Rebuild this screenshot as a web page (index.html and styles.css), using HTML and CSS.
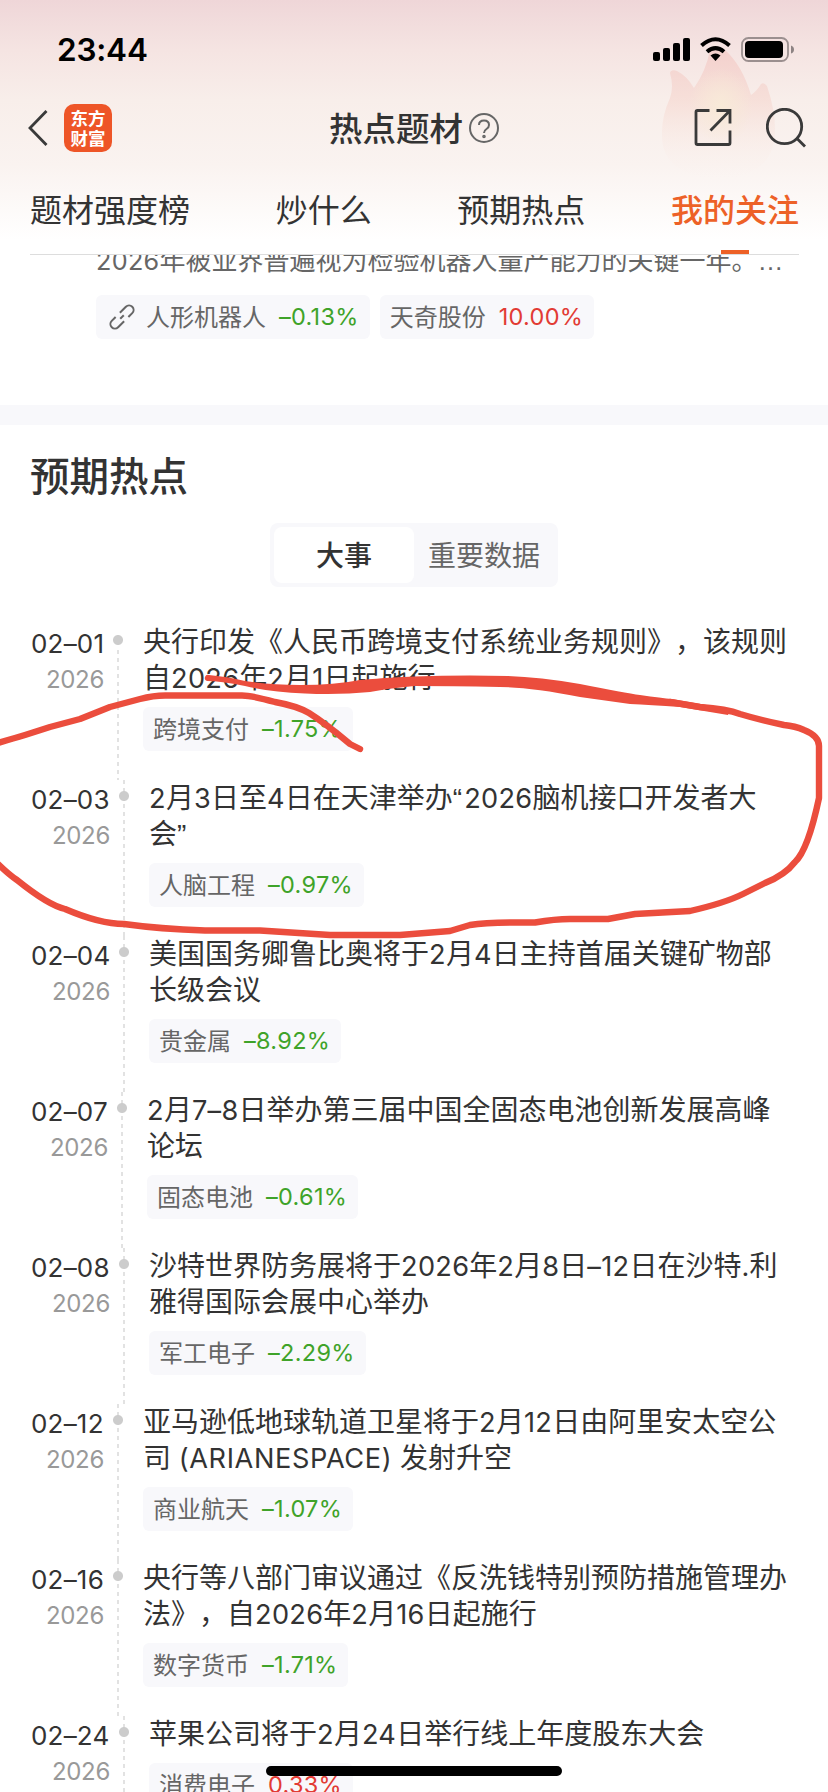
FILE: index.html
```html
<!DOCTYPE html>
<html lang="zh-CN">
<head>
  <meta charset="UTF-8" />
  <meta name="viewport" content="width=device-width, initial-scale=1.0"/>
  <title>热点题材</title>
  <link rel="stylesheet" href="styles.css">
</head>
<body>
  <div class="screen">
    <header class="header">
      <svg class="flame" width="116" height="130" viewBox="0 0 116 130">
        <defs>
          <linearGradient id="flameFill" x1="0" y1="0" x2="0" y2="1">
            <stop offset="0" stop-color="#f3cdc9" stop-opacity=".85"/>
            <stop offset=".4" stop-color="#f6dad3" stop-opacity=".7"/>
            <stop offset=".75" stop-color="#f9e9e3" stop-opacity=".3"/>
            <stop offset="1" stop-color="#faf1ed" stop-opacity="0"/>
          </linearGradient>
          <radialGradient id="flameGlow">
            <stop offset="0" stop-color="#f8ead8"/>
            <stop offset="1" stop-color="#f8ead8" stop-opacity="0"/>
          </radialGradient>
        </defs>
        <path d="M9 23Q10 19 16 21Q26 26 33 38Q45 21 49 0H64Q81 15 90 45Q96 41 100 34Q103 32 106 36Q118 72 112 96Q104 126 58 130Q9 126 2 96Q-2 72 9 48Q13 37 9 23Z" fill="url(#flameFill)"/>
        <ellipse cx="60" cy="56" rx="32" ry="38" fill="url(#flameGlow)"/>
      </svg>

      <div class="status-bar">
        <span class="time">23:44</span>
        <svg class="status-icons" width="142" height="26" viewBox="0 0 142 26">
          <rect x="0" y="15" width="7" height="9" rx="2"/>
          <rect x="10" y="11" width="7" height="13" rx="2"/>
          <rect x="20" y="6" width="7" height="18" rx="2"/>
          <rect x="30" y="1" width="7" height="23" rx="2"/>
          <g fill="none" stroke="#000" stroke-width="4">
            <path d="M48.500 8.500Q62.500 -4 76.500 8.500"/>
            <path d="M54 14.800Q62.500 7.500 71 14.800"/>
          </g>
          <path d="M57.500 18.500Q62.500 14.500 67.500 18.500L62.500 24Z"/>
          <rect x="89" y="1" width="46" height="23" rx="6.500" fill="none" stroke="#9b8f8f" stroke-width="1.800"/>
          <rect x="92" y="4" width="38" height="17" rx="4"/>
          <path d="M138 8.500Q141 9.500 141 12.500Q141 15.500 138 16.500Z" fill="#8d8383"/>
        </svg>
      </div>

      <div class="nav-bar">
        <div class="nav-side">
          <svg class="back" width="20" height="38" viewBox="0 0 20 38"><path d="M18.500 2L2 19L18.500 36"/></svg>
          <div class="app-logo">东方<br>财富</div>
        </div>
        <div class="nav-title">
          <h1>热点题材</h1>
          <svg width="30" height="30" viewBox="0 0 30 30">
            <circle cx="15" cy="15" r="14"/>
            <path d="M10 12Q10 7.500 15 7.500Q20 7.500 20 12Q20 14.500 17.500 16Q15 17.500 15 20"/>
            <circle cx="15" cy="23.500" r=".8"/>
          </svg>
        </div>
        <div class="nav-side nav-actions">
          <svg width="38" height="38" viewBox="0 0 38 38">
            <path d="M15.500 1.500H3.500Q2 1.500 2 3V34Q2 35.500 3.500 35.500H34.500Q36 35.500 36 34V21.500"/>
            <path d="M22.500 1.500H36V14.500M36 1.500L16.500 21.500"/>
          </svg>
          <svg width="40" height="40" viewBox="0 0 40 40">
            <circle cx="18.500" cy="18.500" r="17.200"/>
            <path d="M30.500 30L39 38.500"/>
          </svg>
        </div>
      </div>

      <nav class="tabs">
        <a>题材强度榜</a>
        <a>炒什么</a>
        <a>预期热点</a>
        <a class="active">我的关注</a>
      </nav>
    </header>

    <section class="news">
      <p><span class="num">2026</span>年被业界普遍视为检验机器人量产能力的关键一年。…</p>
      <div class="tags">
        <div class="tag">
          <svg class="link" width="26" height="26" viewBox="0 0 26 26">
            <g transform="rotate(-45 13 13)">
              <path d="M14.500 8.500H23A4.500 4.500 0 0 1 23 17.500H17.500"/>
              <path d="M11.500 17.500H3A4.500 4.500 0 0 1 3 8.500H8.500"/>
              <path d="M10.500 13H15.500"/>
            </g>
          </svg>
          人形机器人<span class="down">–0.13%</span>
        </div>
        <div class="tag">天奇股份<span class="up">10.00%</span></div>
      </div>
    </section>

    <section class="forecast">
      <h2>预期热点</h2>
      <div class="switch">
        <span class="on">大事</span>
        <span>重要数据</span>
      </div>

      <div class="timeline">
        <div class="item short">
          <div class="date">02–01<small>2026</small></div>
          <div class="axis"></div>
          <div class="event">
            <p>央行印发《人民币跨境支付系统业务规则》，该规则<br>自<span class="num">2026</span>年<span class="num">2</span>月<span class="num">1</span>日起施行</p>
            <div class="tag">跨境支付<span class="down">–1.75%</span></div>
          </div>
        </div>
        <div class="item">
          <div class="date">02–03<small>2026</small></div>
          <div class="axis"></div>
          <div class="event">
            <p><span class="num">2</span>月<span class="num">3</span>日至<span class="num">4</span>日在天津举办<span class="quote">“</span><span class="num">2026</span>脑机接口开发者大<br>会<span class="quote">”</span></p>
            <div class="tag">人脑工程<span class="down">–0.97%</span></div>
          </div>
        </div>
        <div class="item">
          <div class="date">02–04<small>2026</small></div>
          <div class="axis"></div>
          <div class="event">
            <p>美国国务卿鲁比奥将于<span class="num">2</span>月<span class="num">4</span>日主持首届关键矿物部<br>长级会议</p>
            <div class="tag">贵金属<span class="down">–8.92%</span></div>
          </div>
        </div>
        <div class="item medium">
          <div class="date">02–07<small>2026</small></div>
          <div class="axis"></div>
          <div class="event">
            <p><span class="num">2</span>月<span class="num">7–8</span>日举办第三届中国全固态电池创新发展高峰<br>论坛</p>
            <div class="tag">固态电池<span class="down">–0.61%</span></div>
          </div>
        </div>
        <div class="item">
          <div class="date">02–08<small>2026</small></div>
          <div class="axis"></div>
          <div class="event">
            <p>沙特世界防务展将于<span class="num">2026</span>年<span class="num">2</span>月<span class="num">8</span>日<span class="num">–12</span>日在沙特<span class="num">.</span>利<br>雅得国际会展中心举办</p>
            <div class="tag">军工电子<span class="down">–2.29%</span></div>
          </div>
        </div>
        <div class="item short">
          <div class="date">02–12<small>2026</small></div>
          <div class="axis"></div>
          <div class="event">
            <p>亚马逊低地球轨道卫星将于<span class="num">2</span>月<span class="num">12</span>日由阿里安太空公<br>司 <span class="num latin">(ARIANESPACE)</span> 发射升空</p>
            <div class="tag">商业航天<span class="down">–1.07%</span></div>
          </div>
        </div>
        <div class="item short">
          <div class="date">02–16<small>2026</small></div>
          <div class="axis"></div>
          <div class="event">
            <p>央行等八部门审议通过《反洗钱特别预防措施管理办<br>法》，自<span class="num">2026</span>年<span class="num">2</span>月<span class="num">16</span>日起施行</p>
            <div class="tag">数字货币<span class="down">–1.71%</span></div>
          </div>
        </div>
        <div class="item">
          <div class="date">02–24<small>2026</small></div>
          <div class="axis"></div>
          <div class="event">
            <p>苹果公司将于<span class="num">2</span>月<span class="num">24</span>日举行线上年度股东大会</p>
            <div class="tag">消费电子<span class="up">0.33%</span></div>
          </div>
        </div>
      </div>
    </section>

    <!-- hand-drawn marker -->
    <svg class="marker" width="828" height="1792" viewBox="0 0 828 1792">
      <path class="line" d="M-6 744Q12 739 25 735L50 727L80 719L110 707L140 699Q155 695 168 695.500H242Q252 695.500 275 702Q297 706 309 713Q325 723 350 744L360 749"/>
      <path class="line" d="M-6 860Q8 874 17 880Q48 905 65 909Q100 924 124 924Q160 929 205 930.500H260L330 935H400Q425 933 450 931L470 925Q490 922 535 922.500Q555 919 570 919H608L635 914L690 911Q725 903 743 894L765 883Q785 875 795 862Q808 850 819 798V746Q819 736 804 730Q795 726 784 725Q760 720 740 714Q727 709 700 707L670 702"/>
      <path class="thick" d="M209 675Q230 677 245 681Q270 685 300 685Q335 685 360 680Q395 677 414 676.500Q460 675 508 676Q540 677 580 684Q625 693 640 695Q662 698 672 699Q700 704 730 709L728 715L680 707Q650 705 630 704L580 697Q530 687 500 687Q450 686 414 686Q392 688 370 692Q340 695 305 693.500Q270 692 245 686Q220 681 207 681A3 3 0 0 1 209 675Z"/>
    </svg>
    <div class="home-bar"></div>
  </div>
</body>
</html>
```

FILE: styles.css
```css
body {
  margin: 0;
  background: #fff;
  font-family: "Liberation Sans", "Noto Sans CJK SC", sans-serif;
  color: #333;
  text-spacing-trim: space-all;
}

h1, h2, p {
  margin: 0;
}

.screen {
  position: relative;
  width: 828px;
  height: 1792px;
  overflow: hidden;
}

/* header */
.header {
  position: relative;
  height: 254px;
  background: linear-gradient(to bottom, #efd6d8 0, #f5e4e2 50px, #f8eeea 100px, #faf3f0 165px, #fff 240px);
}

.flame {
  position: absolute;
  left: 661px;
  top: 50px;
}

.status-bar {
  position: relative;
  display: flex;
  justify-content: space-between;
  align-items: center;
  height: 100px;
  padding: 0 33px 0 57px;
}

.time {
  font: 600 31.500px/1 Inter, sans-serif;
  color: #000;
  letter-spacing: -0.2px;
}

.nav-bar {
  position: relative;
  display: flex;
  align-items: center;
  justify-content: space-between;
  height: 56px;
  padding: 0 22px;
}

.nav-bar svg {
  fill: none;
  stroke: #3a3a3a;
  stroke-width: 2.8;
}

.nav-side {
  display: flex;
  align-items: center;
  width: 112px;
}

.nav-bar .back {
  margin-left: 6px;
}

.app-logo {
  width: 48px;
  height: 48px;
  box-sizing: border-box;
  margin-left: 16px;
  padding-top: 4px;
  border-radius: 10px;
  background: #ee5527;
  color: #fff;
  font: 700 17.5px/20px "Noto Sans CJK SC", sans-serif;
  text-align: center;
}

.nav-title {
  display: flex;
  align-items: center;
  gap: 6px;
}

.nav-title h1 {
  padding-top: 3px;
  font-size: 33.500px;
  line-height: 48px;
  font-weight: 500;
}

.nav-title svg {
  stroke: #666;
  stroke-width: 2;
}

.nav-actions {
  justify-content: space-between;
}

.tabs {
  display: flex;
  justify-content: space-between;
  margin: 0 29px 0 30px;
  height: 99px;
  box-sizing: border-box;
  border-bottom: 1px solid #ddd;
  font-size: 32px;
  line-height: 111px;
}

.tabs a {
  position: relative;
}

.tabs .active {
  color: #ed6127;
  font-weight: 500;
}

.tabs .active::after {
  content: "";
  position: absolute;
  left: 50%;
  top: 94px;
  width: 28px;
  height: 4px;
  margin-left: -14px;
  background: #ed6127;
}

/* numbers */
.num {
  font-family: Inter, "Noto Sans CJK SC", sans-serif;
  font-size: 0.97em;
  line-height: 0;
  letter-spacing: 0.3px;
}

.latin {
  letter-spacing: 0.6px;
}

.tag {
  display: flex;
  align-items: center;
  box-sizing: border-box;
  width: max-content;
  height: 44px;
  padding: 0 11px 3px 10px;
  border-radius: 6px;
  background: #f8f8fb;
  color: #666;
  font-size: 24px;
}

.tag span {
  margin: 2px 0 0 13px;
  font-family: Inter, sans-serif;
  font-size: 23.500px;
  letter-spacing: 0.3px;
}

.tag .down {
  color: #3fa329;
}

.tag .up {
  color: #e23b34;
}

/* clipped news row */
.news {
  height: 151px;
  padding-left: 96px;
  overflow: hidden;
}

.news p {
  margin-top: -11px;
  height: 52px;
  font-size: 26px;
  line-height: 36px;
  color: #666;
  white-space: nowrap;
}

.tags {
  display: flex;
  gap: 10px;
}

.link {
  margin: 3px 11px 0 3px;
  overflow: visible;
  fill: none;
  stroke: #666;
  stroke-width: 2;
}

/* forecast */
.forecast {
  border-top: 20px solid #f8f8fb;
}

.forecast h2 {
  margin: 23px 0 17px 30px;
  font-size: 39.500px;
  line-height: 58px;
  font-weight: 500;
}

.switch {
  display: flex;
  box-sizing: border-box;
  width: 288px;
  height: 64px;
  margin: 0 auto;
  padding: 4px;
  border-radius: 8px;
  background: #f8f8fb;
  color: #666;
  font-size: 28px;
  line-height: 59px;
  text-align: center;
}

.switch span {
  width: 140px;
}

.switch .on {
  border-radius: 8px;
  background: #fff;
  color: #333;
  font-weight: 500;
}

.timeline {
  margin-top: 37px;
}

.item {
  display: flex;
  height: 156px;
  padding-left: 31px;
}

.date {
  width: 79px;
  font: 26px/40px Inter, sans-serif;
  letter-spacing: 0.2px;
  white-space: nowrap;
}

.medium .date {
  width: 77px;
}

.short .date {
  width: 73px;
}

.date small {
  display: block;
  font-size: 24px;
  line-height: 32px;
  letter-spacing: -0.3px;
  color: #999;
  text-align: right;
}

.axis {
  width: 10px;
  margin: 0 20px 0 9px;
  background:
    radial-gradient(circle at 5px 16px, #ccc 4.5px, transparent 5.5px),
    repeating-linear-gradient(to bottom, #e2e2e2 0, #e2e2e2 4px, transparent 4px, transparent 8px) 4px 0 / 2px 100% no-repeat;
}

.short:first-child .axis {
  background:
    radial-gradient(circle at 5px 16px, #ccc 4.5px, transparent 5.5px),
    repeating-linear-gradient(to bottom, #e2e2e2 0, #e2e2e2 4px, transparent 4px, transparent 8px) 4px 26px / 2px 100% no-repeat;
}

.event p {
  padding-top: 1px;
  margin-bottom: 10px;
  font-size: 28px;
  line-height: 36px;
  white-space: nowrap;
}

.quote {
  font-family: "Liberation Sans", sans-serif;
  letter-spacing: 2px;
}

/* overlays */
.marker {
  position: absolute;
  left: 0;
  top: 0;
}

.marker .line {
  fill: none;
  stroke: #eb4d3d;
  stroke-width: 6.4;
  stroke-linecap: round;
  stroke-linejoin: round;
}

.marker .thick {
  fill: #eb4d3d;
}

.home-bar {
  position: absolute;
  left: 266px;
  top: 1766px;
  width: 296px;
  height: 10px;
  border-radius: 5px;
  background: #000;
}
```
